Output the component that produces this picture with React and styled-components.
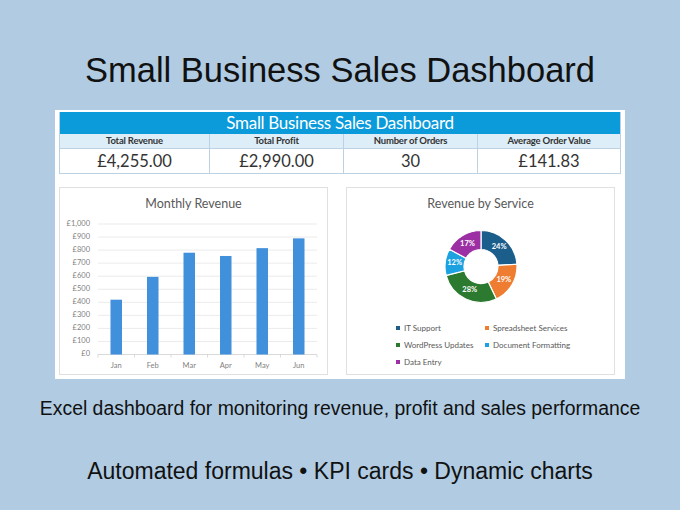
import React from 'react'
import styled, { createGlobalStyle } from 'styled-components'

const GlobalStyle = createGlobalStyle`
  html, body {
    margin: 0;
    padding: 0;
    background: #b0cbe2;
  }
`

const Page = styled.div`
  width: 680px;
  height: 510px;
  box-sizing: border-box;
  padding-top: 50px;
  display: flex;
  flex-direction: column;
  align-items: center;
  font-family: 'Liberation Sans', Arial, sans-serif;
  color: #111;
`

const Heading = styled.h1`
  margin: 0;
  font-size: 34.5px;
  font-weight: 400;
  line-height: 40px;
`

const Panel = styled.div`
  margin-top: 20px;
  width: 570px;
  height: 269px;
  box-sizing: border-box;
  padding: 2px 4px 0 4px;
  background: #fff;
  font-family: Lato, 'Noto Sans', sans-serif;
`

const KpiTable = styled.div`
  width: 562px;
  border: 1px solid #bcd2e3;
  border-top: none;
  box-sizing: border-box;
`

const Banner = styled.div`
  height: 22px;
  background: #0b9bdb;
  color: #fff;
  font-size: 17px;
  line-height: 22px;
  text-align: center;
  letter-spacing: -0.3px;
`

const KpiGrid = styled.div`
  display: grid;
  grid-template-columns: 149px 134px 134px 1fr;
`

const KpiLabel = styled.div`
  height: 14px;
  background: #ddeef8;
  border-left: ${p => (p.$first ? 'none' : '1px solid #bcd2e3')};
  border-bottom: 1px solid #bcd2e3;
  font-size: 9.5px;
  font-weight: 700;
  line-height: 14px;
  text-align: center;
  color: #333;
  letter-spacing: -0.2px;
`

const KpiValue = styled.div`
  height: 24px;
  border-left: ${p => (p.$first ? 'none' : '1px solid #bcd2e3')};
  font-size: 16.5px;
  line-height: 25px;
  text-align: center;
  color: #333;
`

const ChartsRow = styled.div`
  margin-top: 13px;
  display: flex;
  gap: 18px;
`

const ChartCard = styled.div`
  width: 269px;
  height: 188px;
  box-sizing: border-box;
  border: 1px solid #e0e0e0;
  display: flex;
  flex-direction: column;
`

const ChartTitle = styled.div`
  height: 32px;
  padding-top: 8px;
  box-sizing: border-box;
  font-size: 12.5px;
  line-height: 16px;
  text-align: center;
  color: #595959;
`

const Legend = styled.div`
  display: grid;
  grid-template-columns: 89px 1fr;
  grid-auto-rows: 17.3px;
  padding-left: 49px;
  font-size: 8px;
  color: #595959;
`

const LegendItem = styled.div`
  display: flex;
  align-items: center;
  gap: 4px;
  white-space: nowrap;
`

const Swatch = styled.span`
  width: 4px;
  height: 4px;
  background: ${p => p.$color};
`

const Caption = styled.p`
  margin: 18px 0 0;
  font-size: 19.4px;
  line-height: 22px;
`

const Features = styled.p`
  margin: 39px 0 0;
  font-size: 23px;
  line-height: 26px;
`

const kpis = [
  { label: 'Total Revenue', value: '£4,255.00' },
  { label: 'Total Profit', value: '£2,990.00' },
  { label: 'Number of Orders', value: '30' },
  { label: 'Average Order Value', value: '£141.83' },
]

const months = [
  { name: 'Jan', value: 420 },
  { name: 'Feb', value: 595 },
  { name: 'Mar', value: 780 },
  { name: 'Apr', value: 755 },
  { name: 'May', value: 815 },
  { name: 'Jun', value: 890 },
]

const services = [
  { name: 'IT Support', share: 24, color: '#1c5e8b' },
  { name: 'Spreadsheet Services', share: 19, color: '#ee7d31' },
  { name: 'WordPress Updates', share: 28, color: '#2b7a2f' },
  { name: 'Document Formatting', share: 12, color: '#1ca2e0' },
  { name: 'Data Entry', share: 17, color: '#9b2fa3' },
]

const PLOT_TOP = 4
const PLOT_BOTTOM = 134.5
const PLOT_LEFT = 38
const CAT_W = 36.5

const yFor = v => PLOT_BOTTOM - (v / 1000) * (PLOT_BOTTOM - PLOT_TOP)

function BarChart() {
  const ticks = []
  for (let v = 0; v <= 1000; v += 100) ticks.push(v)

  return (
    <svg width="267" height="155" style={{ display: 'block' }}>
      {ticks.map(v => (
        <g key={v}>
          <line
            x1={PLOT_LEFT}
            x2={PLOT_LEFT + CAT_W * 6}
            y1={yFor(v)}
            y2={yFor(v)}
            stroke={v === 0 ? '#d0d0d0' : '#e6e6e6'}
            strokeWidth="0.8"
          />
          <text
            x="30"
            y={yFor(v)}
            textAnchor="end"
            dominantBaseline="middle"
            fontSize="7.5"
            fill="#7f7f7f"
            fontFamily="Lato, sans-serif"
          >
            {v === 1000 ? '£1,000' : `£${v}`}
          </text>
        </g>
      ))}
      {[0, 1, 2, 3, 4, 5, 6].map(i => (
        <line
          key={i}
          x1={PLOT_LEFT + CAT_W * i}
          x2={PLOT_LEFT + CAT_W * i}
          y1={PLOT_BOTTOM}
          y2={PLOT_BOTTOM + 3}
          stroke="#d0d0d0"
          strokeWidth="0.8"
        />
      ))}
      {months.map((m, i) => {
        const cx = PLOT_LEFT + CAT_W * (i + 0.5)
        return (
          <g key={m.name}>
            <rect
              x={cx - 5.75}
              y={yFor(m.value)}
              width="11.5"
              height={PLOT_BOTTOM - yFor(m.value)}
              fill="#4190dc"
            />
            <text
              x={cx}
              y="147.5"
              textAnchor="middle"
              fontSize="7.5"
              fill="#7f7f7f"
              fontFamily="Lato, sans-serif"
            >
              {m.name}
            </text>
          </g>
        )
      })}
    </svg>
  )
}

const polar = (cx, cy, r, a) => [cx + r * Math.sin(a), cy - r * Math.cos(a)]

function arcPath(cx, cy, r0, r1, a0, a1) {
  const large = a1 - a0 > Math.PI ? 1 : 0
  const [x0, y0] = polar(cx, cy, r1, a0)
  const [x1, y1] = polar(cx, cy, r1, a1)
  const [x2, y2] = polar(cx, cy, r0, a1)
  const [x3, y3] = polar(cx, cy, r0, a0)
  return `M${x0} ${y0} A${r1} ${r1} 0 ${large} 1 ${x1} ${y1} L${x2} ${y2} A${r0} ${r0} 0 ${large} 0 ${x3} ${y3} Z`
}

function Donut() {
  const cx = 134
  const cy = 46.5
  let start = 0
  return (
    <svg width="267" height="99" style={{ display: 'block' }}>
      {services.map(s => {
        const a0 = start
        const a1 = start + (s.share / 100) * Math.PI * 2
        start = a1
        const [lx, ly] = polar(cx, cy, 26.5, (a0 + a1) / 2)
        return (
          <g key={s.name}>
            <path
              d={arcPath(cx, cy, 17, 36, a0, a1)}
              fill={s.color}
              stroke="#fff"
              strokeWidth="1.2"
            />
            <text
              x={lx}
              y={ly}
              textAnchor="middle"
              dominantBaseline="middle"
              fontSize="7.5"
              fontWeight="700"
              fill="#fff"
              fontFamily="Lato, sans-serif"
            >
              {s.share}%
            </text>
          </g>
        )
      })}
    </svg>
  )
}

export default function App() {
  return (
    <Page>
      <GlobalStyle />
      <Heading>Small Business Sales Dashboard</Heading>
      <Panel>
        <KpiTable>
          <Banner>Small Business Sales Dashboard</Banner>
          <KpiGrid>
            {kpis.map((k, i) => (
              <KpiLabel key={k.label} $first={i === 0}>
                {k.label}
              </KpiLabel>
            ))}
            {kpis.map((k, i) => (
              <KpiValue key={k.label} $first={i === 0}>
                {k.value}
              </KpiValue>
            ))}
          </KpiGrid>
        </KpiTable>
        <ChartsRow>
          <ChartCard>
            <ChartTitle>Monthly Revenue</ChartTitle>
            <BarChart />
          </ChartCard>
          <ChartCard>
            <ChartTitle>Revenue by Service</ChartTitle>
            <Donut />
            <Legend>
              {services.map(s => (
                <LegendItem key={s.name}>
                  <Swatch $color={s.color} />
                  {s.name}
                </LegendItem>
              ))}
            </Legend>
          </ChartCard>
        </ChartsRow>
      </Panel>
      <Caption>Excel dashboard for monitoring revenue, profit and sales performance</Caption>
      <Features>Automated formulas • KPI cards • Dynamic charts</Features>
    </Page>
  )
}
